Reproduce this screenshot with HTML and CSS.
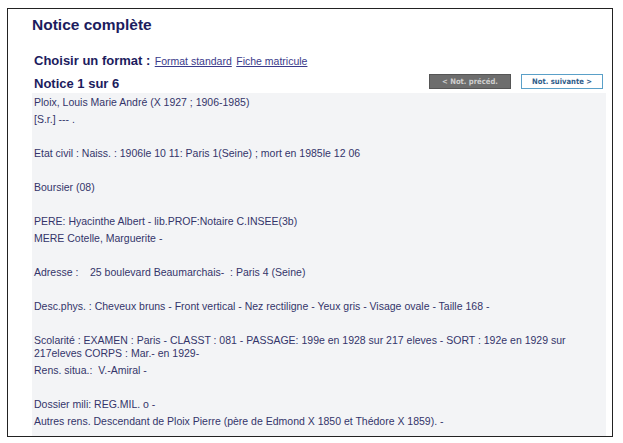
FILE: index.html
```html
<!DOCTYPE html>
<html lang="fr">
<head>
    <meta charset="UTF-8">
    <meta name="viewport" content="width=device-width, initial-scale=1.0">
    <title>Notice complète</title>
    <link rel="stylesheet" href="styles.css">
</head>
<body>
    <div class="frame">
        <h1>Notice complète</h1>
        <div class="format">
            <span class="format-label">Choisir un format :</span>
            <a href="#">Format standard</a> <a href="#">Fiche matricule</a>
        </div>
        <div class="notice-row">
            <h2>Notice 1 sur 6</h2>
            <div class="nav">
                <button class="btn-prev">&lt; Not. précéd.</button>
                <button class="btn-next">Not. suivante &gt;</button>
            </div>
        </div>
        <div class="notice">
            <div class="line">Ploix, Louis Marie André (X 1927 ; 1906-1985)</div>
            <div class="line">[S.r.] --- .</div>
            <div class="line">&nbsp;</div>
            <div class="line">Etat civil : Naiss. : 1906le 10 11: Paris 1(Seine) ; mort en 1985le 12 06</div>
            <div class="line">&nbsp;</div>
            <div class="line">Boursier (08)</div>
            <div class="line">&nbsp;</div>
            <div class="line">PERE: Hyacinthe Albert - lib.PROF:Notaire C.INSEE(3b)</div>
            <div class="line">MERE Cotelle, Marguerite -</div>
            <div class="line">&nbsp;</div>
            <div class="line">Adresse : &nbsp;&nbsp; 25 boulevard Beaumarchais- &nbsp;: Paris 4 (Seine)</div>
            <div class="line">&nbsp;</div>
            <div class="line">Desc.phys. : Cheveux bruns - Front vertical - Nez rectiligne - Yeux gris - Visage ovale - Taille 168 -</div>
            <div class="line">&nbsp;</div>
            <div class="line">Scolarité : EXAMEN : Paris - CLASST : 081 - PASSAGE: 199e en 1928 sur 217 eleves - SORT : 192e en 1929 sur 217eleves CORPS : Mar.- en 1929-</div>
            <div class="line">Rens. situa.: &nbsp;V.-Amiral -</div>
            <div class="line">&nbsp;</div>
            <div class="line">Dossier mili: REG.MIL. o -</div>
            <div class="line">Autres rens. Descendant de Ploix Pierre (père de Edmond X 1850 et Thédore X 1859). -</div>
        </div>
    </div>
</body>
</html>
```

FILE: styles.css
```css
body {
    margin: 0;
    background-color: #fff;
    font-family: "Liberation Sans", Arial, sans-serif;
}
.frame {
    margin: 8px 0 0 7px;
    width: 606px;
    height: 429px;
    box-sizing: border-box;
    border: 1px solid #222;
    padding: 0 6px 0 24px;
    overflow: hidden;
}
h1 {
    margin: 7px 0 0;
    font-size: 15.5px;
    line-height: 18px;
    font-weight: bold;
    color: #1c1c5e;
}
.format {
    margin-top: 18px;
    padding-left: 2px;
    line-height: 16px;
}
.format-label {
    font-size: 13px;
    font-weight: bold;
    color: #1c1c5e;
}
.format a {
    font-size: 10.5px;
    color: #3a3a8a;
    text-decoration: underline;
}
.notice-row {
    display: flex;
    justify-content: space-between;
    align-items: flex-start;
    margin-top: 4px;
    height: 20px;
    padding-left: 2px;
}
h2 {
    margin: 0;
    padding-top: 3px;
    font-size: 13px;
    line-height: 16px;
    font-weight: bold;
    color: #1c1c5e;
}
.nav {
    display: flex;
    gap: 10px;
    margin-top: 1px;
    margin-right: 3px;
}
.nav button {
    width: 82px;
    height: 15px;
    padding: 0;
    font-family: "DejaVu Sans Condensed", "DejaVu Sans", Verdana, sans-serif;
    font-stretch: condensed;
    font-size: 7.6px;
    font-weight: bold;
    line-height: 13px;
    cursor: pointer;
}
.btn-prev {
    background-color: #6d6d6d;
    border: 1px solid #555;
    color: #cfcfcf;
}
.btn-next {
    background-color: #fff;
    border: 1px solid #5aa0c8;
    color: #2e5c8a;
}
.notice {
    background-color: #f3f4f6;
    padding: 3px 5px 20px 2px;
    font-size: 10.5px;
    color: #34346a;
}
.line {
    line-height: 13px;
    margin-bottom: 4px;
}
```
